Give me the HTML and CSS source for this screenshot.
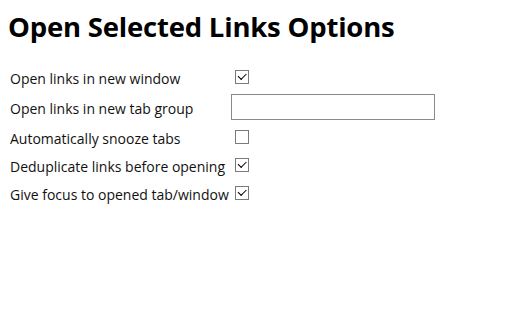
FILE: index.html
```html
<!DOCTYPE html>
<html>
<head>
<meta charset="utf-8">
<link rel="stylesheet" href="styles.css">
</head>
<body>
<h1 class="title">Open Selected Links Options</h1>
<div class="options">
  <label class="label" for="w">Open links in new window</label>
  <div class="cell"><input class="check" type="checkbox" id="w" checked></div>
  <label class="label tall" for="g">Open links in new tab group</label>
  <div class="cell tall"><input class="text" type="text" id="g"></div>
  <label class="label" for="s">Automatically snooze tabs</label>
  <div class="cell"><input class="check" type="checkbox" id="s"></div>
  <label class="label" for="d">Deduplicate links before opening</label>
  <div class="cell"><input class="check" type="checkbox" id="d" checked></div>
  <label class="label" for="f">Give focus to opened tab/window</label>
  <div class="cell"><input class="check" type="checkbox" id="f" checked></div>
</div>
</body>
</html>
```
FILE: styles.css
```css
body {
  margin: 8px;
  font-family: "Open Sans", "Noto Sans", sans-serif;
  color: #000;
  background: #fff;
}
.title {
  font-size: 27.5px;
  font-weight: 700;
  margin: 1px 0 18px 0;
  line-height: 36px;
  letter-spacing: -0.2px;
}
.options {
  display: grid;
  grid-template-columns: 220px auto;
  justify-content: start;
  padding-left: 2px;
}
.label {
  box-sizing: border-box;
  font-size: 14px;
  height: 28px;
  padding-top: 3px;
  display: flex;
  align-items: center;
  white-space: nowrap;
  color: #111;
}
.cell {
  height: 28px;
  display: flex;
  align-items: center;
}
.tall {
  height: 32px;
}
.check {
  appearance: none;
  -webkit-appearance: none;
  position: relative;
  box-sizing: border-box;
  width: 14px;
  height: 14px;
  margin: 0 0 0 5px;
  border: 1px solid #7a7a7a;
  background: #fff;
  border-radius: 0;
}
.check:checked::after {
  content: "";
  position: absolute;
  left: 2px;
  top: 2px;
  width: 7px;
  height: 3.5px;
  border-left: 1.5px solid #000;
  border-bottom: 1.5px solid #000;
  transform: rotate(-45deg);
}
.text {
  box-sizing: border-box;
  width: 204px;
  height: 26px;
  margin: 0 0 0 1px;
  border: 1px solid #8a8a8a;
  padding: 1px 3px;
  background: #fff;
}
```
